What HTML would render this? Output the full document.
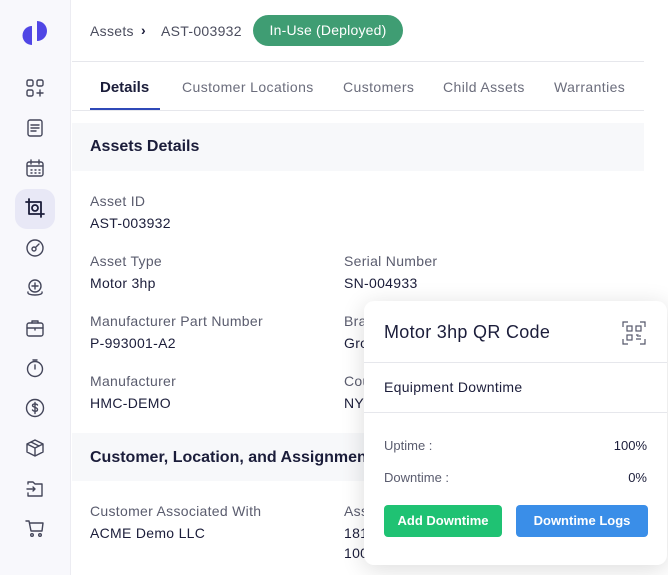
<!DOCTYPE html>
<html><head><style>
*{margin:0;padding:0;box-sizing:border-box}
body{width:668px;height:575px;overflow:hidden;background:#fff;font-family:"Liberation Sans",sans-serif;position:relative}
.a{position:absolute;white-space:nowrap}
.sb{position:absolute;left:0;top:0;width:71px;height:575px;background:#f8f8fc;border-right:1px solid #ececf2}
.lab{font-size:14px;color:#5a5c6e;letter-spacing:.3px}
.val{font-size:14px;color:#1b1d3a;letter-spacing:.3px}
.tab{font-size:14px;color:#6b6d7c;top:79px;letter-spacing:.4px}
.sec{position:absolute;left:72px;width:572px;background:#f7f8fa}
</style></head><body>
<div class="sb"></div>
<svg class="a" style="left:0;top:0" width="60" height="60"><path d="M32 26 A9.5 9.5 0 0 0 32 45Z" fill="#5046e5"/><path d="M37 21 A10 10 0 0 1 37 41Z" fill="#5046e5"/></svg>
<svg class="a" style="left:15px;top:189px" width="40" height="40"><rect width="40" height="40" rx="12" fill="#e8e8f6"/></svg>
<svg class="a" style="left:25px;top:78px" width="20" height="460" viewBox="0 0 20 460" fill="none" stroke="#44465a" stroke-width="1.4" stroke-linecap="round" stroke-linejoin="round">
<rect x="2" y="2" width="6" height="6" rx="1.5"/><rect x="12" y="2" width="6" height="6" rx="1.5"/><rect x="2" y="12" width="6" height="6" rx="1.5"/><path d="M15 12v6M12 15h6"/>
<g transform="translate(0,40)"><rect x="3" y="2" width="14" height="16" rx="2"/><path d="M6 7h8M6 10h8M6 13h5"/></g>
<g transform="translate(0,80)"><rect x="2" y="4" width="16" height="14" rx="2"/><path d="M2 8h16M6 2v4M14 2v4M6 12h1M10 12h1M14 12h1M6 15h1M10 15h1M14 15h1"/></g>
<g transform="translate(0,120)" stroke="#1b1d3a" stroke-width="1.8"><rect x="4" y="4" width="12" height="12"/><circle cx="10" cy="10" r="3"/><path d="M1 4h3M4 1v3M16 16v3M16 16h3"/></g>
<g transform="translate(0,160)"><circle cx="10" cy="10" r="8"/><circle cx="9" cy="11" r="2"/><path d="M11 9l3-3"/></g>
<g transform="translate(0,200)"><circle cx="10" cy="8" r="6"/><path d="M10 5v6M7 8h6M3 14c-2 4 16 4 14 0"/></g>
<g transform="translate(0,240)"><rect x="2" y="5" width="16" height="13" rx="2"/><path d="M7 5V3h6v2M2 10h16M10 10v2"/></g>
<g transform="translate(0,280)"><circle cx="10" cy="11" r="7.5"/><path d="M10 7v4M8 2h4"/></g>
<g transform="translate(0,320)"><circle cx="10" cy="10" r="8.5"/><path d="M12.5 7c-1-1.5-5-1.5-5 .5s5 1.5 5 4-4 2-5 .5M10 4.5v11"/></g>
<g transform="translate(0,360)"><path d="M10 2l8 4v8l-8 4-8-4V6z M2 6l8 4 8-4M10 10v8M6 4l8 4"/></g>
<g transform="translate(0,400)"><path d="M3 6V4h5l2 2h7v12H3v-3M2 11h8M8 9l2 2-2 2"/></g>
<g transform="translate(0,440)"><path d="M1 3h3l2 10h11l1-8H5"/><circle cx="7" cy="17" r="1.3"/><circle cx="15" cy="17" r="1.3"/></g>
</svg>
<div class="a" style="left:90px;top:23px;font-size:14px;color:#4b4d5e;letter-spacing:.3px">Assets</div>
<div class="a" style="left:141px;top:22px;font-size:14px;color:#1b1d3a;font-weight:bold">›</div>
<div class="a" style="left:161px;top:23px;font-size:14px;color:#4b4d5e;letter-spacing:.3px">AST-003932</div>
<div class="a" style="left:253px;top:15px;width:150px;height:31px;border-radius:16px;background:#3f9d73;color:#fff;font-size:14px;line-height:31px;text-align:center;letter-spacing:.2px">In-Use (Deployed)</div>
<div class="a" style="left:72px;top:61px;width:572px;height:1px;background:#e6e7ec"></div>
<div class="a tab" style="left:100px;color:#1b1d3a;font-weight:bold;font-size:15px;letter-spacing:0">Details</div>
<div class="a" style="left:90px;top:108px;width:70px;height:2px;background:#2f49b8"></div>
<div class="a tab" style="left:182px">Customer Locations</div>
<div class="a tab" style="left:343px">Customers</div>
<div class="a tab" style="left:443px">Child Assets</div>
<div class="a tab" style="left:554px">Warranties</div>
<div class="a" style="left:72px;top:110px;width:572px;height:1px;background:#e6e7ec"></div>
<div class="sec" style="top:123px;height:48px"></div>
<div class="a" style="left:90px;top:138px;font-size:16px;font-weight:bold;color:#1b1d3a">Assets Details</div>
<div class="a lab" style="left:90px;top:193px">Asset ID</div><div class="a val" style="left:90px;top:215px">AST-003932</div>
<div class="a lab" style="left:90px;top:253px">Asset Type</div><div class="a val" style="left:90px;top:275px">Motor 3hp</div>
<div class="a lab" style="left:344px;top:253px">Serial Number</div><div class="a val" style="left:344px;top:275px">SN-004933</div>
<div class="a lab" style="left:90px;top:313px">Manufacturer Part Number</div><div class="a val" style="left:90px;top:335px">P-993001-A2</div>
<div class="a lab" style="left:344px;top:313px">Brand</div><div class="a val" style="left:344px;top:335px">Grohe</div>
<div class="a lab" style="left:90px;top:373px">Manufacturer</div><div class="a val" style="left:90px;top:395px">HMC-DEMO</div>
<div class="a lab" style="left:344px;top:373px">Country</div><div class="a val" style="left:344px;top:395px">NY</div>
<div class="sec" style="top:433px;height:48px"></div>
<div class="a" style="left:90px;top:449px;font-size:16px;font-weight:bold;color:#1b1d3a">Customer, Location, and Assignment</div>
<div class="a lab" style="left:90px;top:503px">Customer Associated With</div><div class="a val" style="left:90px;top:525px">ACME Demo LLC</div>
<div class="a lab" style="left:344px;top:503px">Assigned</div><div class="a val" style="left:344px;top:525px">1812 Broadway</div><div class="a val" style="left:344px;top:545px">10012, United States</div>
<div class="a" style="left:364px;top:301px;width:303px;height:264px;background:#fff;border-radius:10px;box-shadow:0 4px 24px rgba(0,0,0,.14)">
<div class="a" style="left:20px;top:21px;font-size:18px;color:#1b1d3a;letter-spacing:.3px">Motor 3hp QR Code</div>
<svg class="a" style="left:258px;top:20px" width="24" height="24" viewBox="0 0 24 24" fill="none" stroke="#55576a" stroke-width="1.2"><path d="M1 6V1h5M18 1h5v5M23 18v5h-5M6 23H1v-5"/><rect x="5" y="5" width="5" height="5"/><rect x="14" y="5" width="5" height="5"/><rect x="5" y="14" width="5" height="5"/><path d="M14 14h2v2M18 14v2M14 18h5"/></svg>
<div class="a" style="left:0;top:61px;width:303px;height:1px;background:#e6e7ec"></div>
<div class="a" style="left:20px;top:78px;font-size:14px;color:#1b1d3a;letter-spacing:.3px">Equipment Downtime</div>
<div class="a" style="left:0;top:111px;width:303px;height:1px;background:#e6e7ec"></div>
<div class="a" style="left:20px;top:137px;font-size:13px;color:#5a5c6e">Uptime :</div>
<div class="a" style="right:20px;top:137px;font-size:13px;color:#1b1d3a">100%</div>
<div class="a" style="left:20px;top:169px;font-size:13px;color:#5a5c6e">Downtime :</div>
<div class="a" style="right:20px;top:169px;font-size:13px;color:#1b1d3a">0%</div>
<div class="a" style="left:20px;top:204px;width:118px;height:32px;border-radius:4px;background:#1fc273;color:#fff;font-size:13px;font-weight:bold;line-height:32px;text-align:center">Add Downtime</div>
<div class="a" style="left:152px;top:204px;width:132px;height:32px;border-radius:4px;background:#3a8ee8;color:#fff;font-size:13px;font-weight:bold;line-height:32px;text-align:center">Downtime Logs</div>
</div>
</body></html>
